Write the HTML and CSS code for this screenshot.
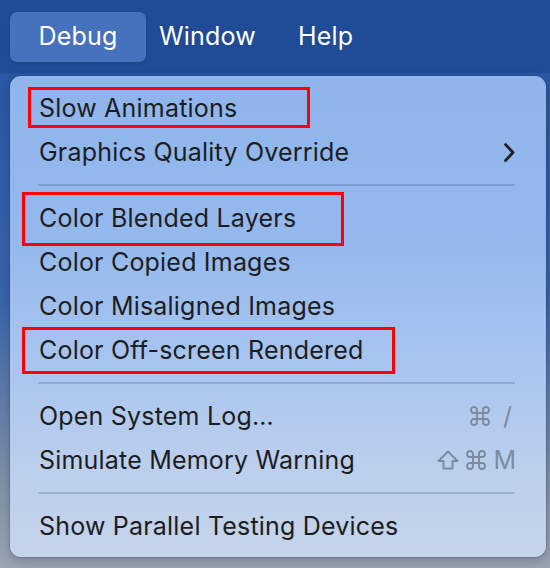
FILE: index.html
```html
<!DOCTYPE html>
<html>
<head>
<meta charset="utf-8">
<link rel="stylesheet" href="styles.css">
</head>
<body>
<div class="menubar">
  <div class="bar-item active">Debug</div>
  <div class="bar-item window">Window</div>
  <div class="bar-item help">Help</div>
</div>
<div class="menu">
  <div class="row"><span class="label">Slow Animations</span><span class="mark m1"></span></div>
  <div class="row"><span class="label">Graphics Quality Override</span>
    <svg class="chev" width="11" height="19" viewBox="0 0 11 19"><polyline points="1.5,1.5 9,9.5 1.5,17.5" fill="none" stroke="#1e1f25" stroke-width="2.8" stroke-linecap="round" stroke-linejoin="round"/></svg>
  </div>
  <div class="sep"></div>
  <div class="row"><span class="label">Color Blended Layers</span><span class="mark m2"></span></div>
  <div class="row"><span class="label">Color Copied Images</span></div>
  <div class="row"><span class="label">Color Misaligned Images</span></div>
  <div class="row"><span class="label">Color Off-screen Rendered</span><span class="mark m3"></span></div>
  <div class="sep"></div>
  <div class="row"><span class="label">Open System Log…</span>
    <span class="keys">
      <svg class="cmd" width="20" height="20" viewBox="0 0 20 20"><path d="M7 7V4A3 3 0 1 0 4 7H16A3 3 0 1 0 13 4V16A3 3 0 1 0 16 13H4A3 3 0 1 0 7 16Z" fill="none" stroke="currentColor" stroke-width="1.9"/></svg>
      <span class="key slash">/</span>
    </span>
  </div>
  <div class="row"><span class="label">Simulate Memory Warning</span>
    <span class="keys">
      <svg class="shift" width="22" height="20" viewBox="0 0 22 20"><path d="M11 1.5L20.5 11H15.5V18.5H6.5V11H1.5Z" fill="none" stroke="currentColor" stroke-width="2" stroke-linejoin="round"/></svg>
      <svg class="cmd" width="20" height="20" viewBox="0 0 20 20"><path d="M7 7V4A3 3 0 1 0 4 7H16A3 3 0 1 0 13 4V16A3 3 0 1 0 16 13H4A3 3 0 1 0 7 16Z" fill="none" stroke="currentColor" stroke-width="1.9"/></svg>
      <span class="key">M</span>
    </span>
  </div>
  <div class="sep"></div>
  <div class="row"><span class="label">Show Parallel Testing Devices</span></div>
</div>
</body>
</html>
```

FILE: styles.css
```css
html, body {
  margin: 0;
  padding: 0;
}
body {
  width: 550px;
  height: 568px;
  overflow: hidden;
  font-family: Inter, "Noto Sans", sans-serif;
  background: linear-gradient(180deg, #1f4b97 0px, #1f4b97 73px, #2b58a4 74px, #3a64ab 300px, #7f90a8 480px, #9aa6b4 568px);
}
.menubar {
  height: 73px;
  display: flex;
  align-items: center;
  padding-left: 10px;
  box-sizing: border-box;
  background: #1f4b97;
  color: #ffffff;
  font-size: 25px;
  letter-spacing: 0.2px;
}
.bar-item {
  height: 50px;
  display: flex;
  align-items: center;
  line-height: 1;
}
.bar-item.active {
  width: 136px;
  justify-content: center;
  background: #4671bc;
  border-radius: 7px;
  box-shadow: 0 1px 3px rgba(0,0,0,0.15);
}
.bar-item.window { margin-left: 13px; }
.bar-item.help { margin-left: 42px; }
.menu {
  margin: 3px 0 0 10px;
  width: 536px;
  height: 481px;
  box-sizing: border-box;
  padding: 10px 30px 9px 29px;
  border-radius: 11px;
  background: linear-gradient(180deg, #8fb5ec 0%, #95b9ed 35%, #aac6ef 62%, #bccfec 82%, #c5d4ea 100%);
  box-shadow: 0 0 0 1px rgba(20,40,80,0.18), 0 4px 12px rgba(0,0,0,0.2);
  color: #1c1d22;
  font-size: 25px;
  letter-spacing: 0.2px;
}
.row {
  position: relative;
  height: 44px;
  display: flex;
  align-items: center;
  justify-content: space-between;
}
.label {
  line-height: 1;
}
.sep {
  height: 22px;
  display: flex;
  align-items: center;
}
.sep::before {
  content: "";
  display: block;
  width: 100%;
  margin-left: -1px;
  height: 2px;
  background: rgba(40, 70, 130, 0.22);
}
.chev {
  margin-right: 1px;
}
.keys {
  display: flex;
  align-items: center;
  color: #7d8ba2;
  gap: 7px;
  letter-spacing: 0;
}
.key {
  font-size: 25px;
  line-height: 1;
}
.slash {
  margin-left: 6px;
  margin-right: 4px;
}
.mark {
  position: absolute;
  border: 3px solid #ff0000;
  box-sizing: border-box;
  pointer-events: none;
}
.m1 { left: -11px; top: 1px; width: 282px; height: 41px; }
.m2 { left: -17px; top: -4px; width: 322px; height: 54px; }
.m3 { left: -17px; top: -1px; width: 373px; height: 47px; }
```
